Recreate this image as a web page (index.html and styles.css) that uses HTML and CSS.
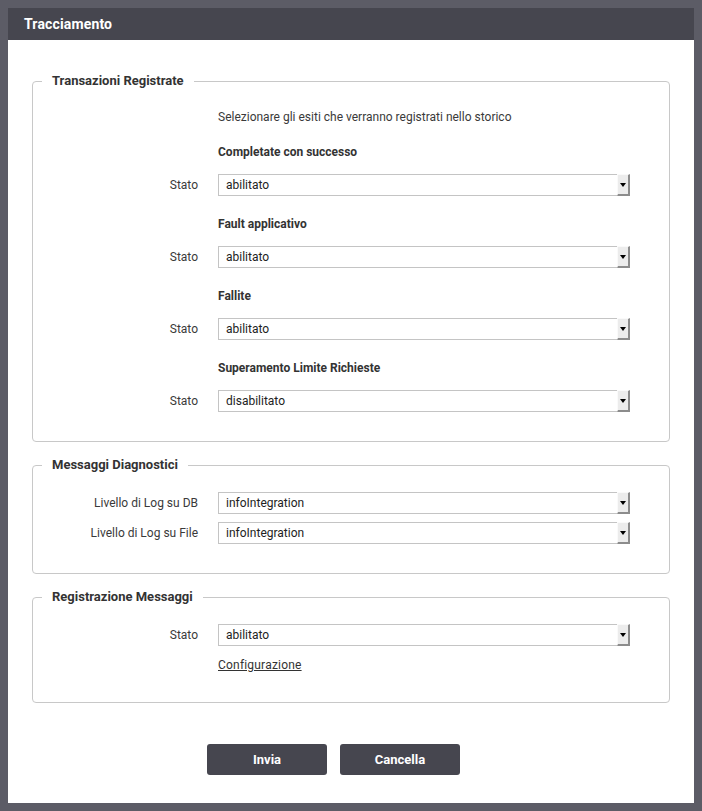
FILE: index.html
```html
<!DOCTYPE html>
<html>
<head>
<meta charset="utf-8">
<link rel="stylesheet" href="styles.css">
</head>
<body>
<div class="panel">
  <div class="header">Tracciamento</div>
  <div class="content">
    <fieldset class="fs fs1">
      <legend>Transazioni Registrate</legend>
      <div class="row intro"><span class="label"></span><span class="text">Selezionare gli esiti che verranno registrati nello storico</span></div>
      <div class="row heading first"><span class="label"></span><span class="text">Completate con successo</span></div>
      <div class="row field"><span class="label">Stato</span><div class="select"><span class="val">abilitato</span><span class="btn"><span class="tri"></span></span></div></div>
      <div class="row heading"><span class="label"></span><span class="text">Fault applicativo</span></div>
      <div class="row field"><span class="label">Stato</span><div class="select"><span class="val">abilitato</span><span class="btn"><span class="tri"></span></span></div></div>
      <div class="row heading"><span class="label"></span><span class="text">Fallite</span></div>
      <div class="row field"><span class="label">Stato</span><div class="select"><span class="val">abilitato</span><span class="btn"><span class="tri"></span></span></div></div>
      <div class="row heading"><span class="label"></span><span class="text">Superamento Limite Richieste</span></div>
      <div class="row field"><span class="label">Stato</span><div class="select"><span class="val">disabilitato</span><span class="btn"><span class="tri"></span></span></div></div>
    </fieldset>
    <fieldset class="fs fs2">
      <legend>Messaggi Diagnostici</legend>
      <div class="row field"><span class="label">Livello di Log su DB</span><div class="select"><span class="val">infoIntegration</span><span class="btn"><span class="tri"></span></span></div></div>
      <div class="row field second"><span class="label">Livello di Log su File</span><div class="select"><span class="val">infoIntegration</span><span class="btn"><span class="tri"></span></span></div></div>
    </fieldset>
    <fieldset class="fs fs3">
      <legend>Registrazione Messaggi</legend>
      <div class="row field"><span class="label">Stato</span><div class="select"><span class="val">abilitato</span><span class="btn"><span class="tri"></span></span></div></div>
      <div class="row link-row"><span class="label"></span><a class="link" href="#">Configurazione</a></div>
    </fieldset>
    <div class="buttons">
      <button class="button">Invia</button>
      <button class="button">Cancella</button>
    </div>
  </div>
</div>
</body>
</html>
```
FILE: styles.css
```css
html, body { margin: 0; padding: 0; }
body {
  background: #5c5c66;
  padding: 8px;
  font-family: Roboto, "Liberation Sans", sans-serif;
  color: #3a3a3a;
  font-size: 12px;
}
.panel {
  width: 686px;
  height: 795px;
  background: #fff;
}
.header {
  height: 32px;
  background: #46464f;
  color: #fff;
  font-weight: bold;
  font-size: 14px;
  letter-spacing: 0.15px;
  line-height: 32px;
  padding-left: 16px;
}
.content {
  padding: 33px 24px 0 24px;
}
.fs {
  margin: 0;
  padding: 0 0 29px 0;
  border: 1px solid #c8c8c8;
  border-radius: 4px;
  min-width: 0;
}
.fs legend {
  margin-left: 9px;
  padding: 0 10px;
  font-weight: bold;
  font-size: 13px;
  line-height: 16px;
  color: #333;
}
.fs2, .fs3 { margin-top: 15px; }
.fs3 { padding-bottom: 27px; }
.row {
  display: flex;
  align-items: center;
  gap: 20px;
}
.label {
  width: 165px;
  flex: none;
  text-align: right;
}
.intro { height: 20px; margin-top: 18px; }
.heading { height: 20px; margin-top: 18px; font-weight: bold; color: #333; }
.heading.first { margin-top: 15px; }
.field { height: 22px; margin-top: 12px; }
.fs2 .field, .fs3 .field { margin-top: 19px; }
.fs2 .field.second { margin-top: 8px; }
.select {
  display: flex;
  width: 412px;
  height: 22px;
  box-sizing: border-box;
  border: 1px solid #c4c4c4;
  border-right: none;
}
.val {
  flex: 1;
  padding-left: 7px;
  line-height: 20px;
  font-size: 12px;
  color: #222;
}
.btn {
  width: 13px;
  box-sizing: border-box;
  margin-top: -1px;
  height: 22px;
  background: #ececec;
  border-top: 1px solid #fafafa;
  border-left: 1px solid #fafafa;
  border-right: 2px solid #8c8c8c;
  border-bottom: 2px solid #8c8c8c;
  display: flex;
  align-items: center;
  justify-content: center;
}
.tri {
  width: 0;
  height: 0;
  border-left: 3px solid transparent;
  border-right: 3px solid transparent;
  border-top: 4px solid #000;
  margin-top: 1px;
}
.link-row { height: 20px; margin-top: 9px; }
.link { color: #333; text-decoration: underline; letter-spacing: 0.2px; }
.buttons {
  display: flex;
  gap: 13px;
  padding-left: 175px;
  margin-top: 41px;
}
.button {
  width: 120px;
  height: 31px;
  border: none;
  border-radius: 3px;
  background: #46464f;
  color: #fff;
  font-family: Roboto, "Liberation Sans", sans-serif;
  font-weight: bold;
  font-size: 13px;
  padding: 0;
}
```
